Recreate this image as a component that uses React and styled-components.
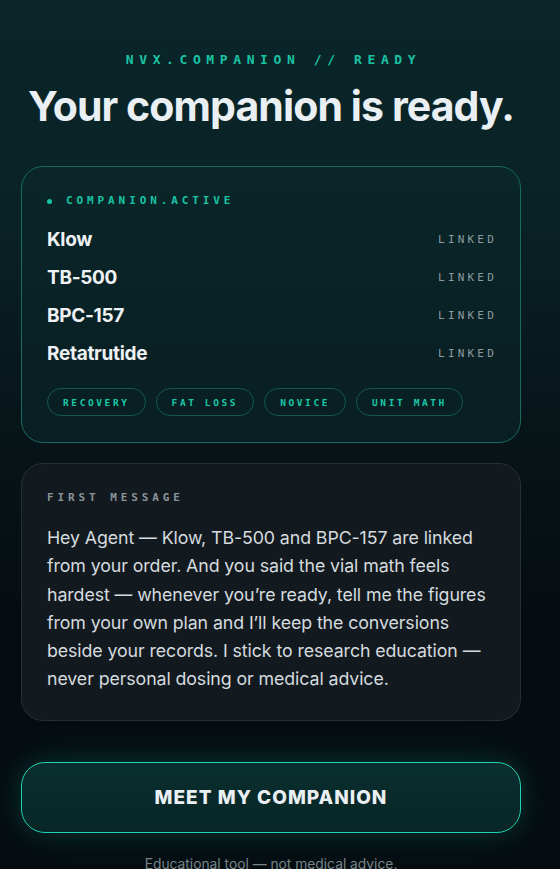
import React from "react";
import styled, { createGlobalStyle } from "styled-components";

const Global = createGlobalStyle`
  html, body { margin: 0; padding: 0; }
  body {
    background: #060d11;
    font-family: Inter, "Noto Sans", sans-serif;
    -webkit-font-smoothing: antialiased;
  }
`;

const Page = styled.div`
  min-height: 869px;
  box-sizing: border-box;
  padding: 50px 21px 0;
  background: linear-gradient(180deg, #0a2629 0%, #092226 25%, #071418 50%, #060d12 70%, #060d11 100%);
`;

const Column = styled.main`
  width: 500px;
  display: flex;
  flex-direction: column;
  align-items: stretch;
`;

const Eyebrow = styled.div`
  font-family: "DejaVu Sans Mono", "Liberation Mono", monospace;
  font-weight: 700;
  font-size: 13px;
  letter-spacing: 5.6px;
  color: #19c3a4;
  text-align: center;
  line-height: 20px;
  padding-left: 5px;
`;

const Heading = styled.h1`
  margin: 12px 0 0;
  font-family: Inter, sans-serif;
  font-weight: 700;
  font-size: 41px;
  letter-spacing: -0.9px;
  line-height: 48px;
  color: #e9eff2;
  text-align: center;
`;

const Card = styled.section`
  box-sizing: border-box;
  border-radius: 22px;
  border: 1px solid ${(p) => (p.$accent ? "#176a5f" : "#243036")};
  background: ${(p) => (p.$accent ? "linear-gradient(180deg, #0a2629 0%, #081e22 100%)" : "#121a20")};
  padding: 26px 25px 26px;
  margin-top: ${(p) => p.$mt}px;
`;

const Label = styled.div`
  font-family: "DejaVu Sans Mono", "Liberation Mono", monospace;
  font-weight: 700;
  font-size: 11px;
  letter-spacing: 3.9px;
  line-height: 16px;
  color: ${(p) => p.$color};
  display: flex;
  align-items: center;
  gap: 14px;
`;

const Dot = styled.span`
  width: 5px;
  height: 5px;
  border-radius: 50%;
  background: #19c3a4;
`;

const List = styled.div`
  margin-top: 18px;
  display: flex;
  flex-direction: column;
  gap: 14px;
`;

const Row = styled.div`
  display: flex;
  justify-content: space-between;
  align-items: center;
  height: 24px;
`;

const Name = styled.span`
  font-family: Inter, sans-serif;
  font-weight: 700;
  font-size: 19px;
  letter-spacing: -0.3px;
  color: #eef2f4;
`;

const Status = styled.span`
  font-family: "DejaVu Sans Mono", "Liberation Mono", monospace;
  font-size: 11px;
  letter-spacing: 3.2px;
  color: #8d9ba0;
  margin-right: -2px;
`;

const Chips = styled.div`
  display: flex;
  gap: 10px;
  margin-top: 23px;
`;

const Chip = styled.span`
  box-sizing: border-box;
  height: 28px;
  padding: 0 15px;
  border-radius: 14px;
  border: 1px solid #17564f;
  display: inline-flex;
  align-items: center;
  font-family: "DejaVu Sans Mono", "Liberation Mono", monospace;
  font-weight: 700;
  font-size: 9.5px;
  letter-spacing: 2.6px;
  color: #1bc7a7;
`;

const Message = styled.p`
  margin: 18px 0 0;
  font-family: Inter, sans-serif;
  font-size: 17.8px;
  line-height: 28.3px;
  color: #d5dbdf;
  letter-spacing: -0.1px;
`;

const Button = styled.button`
  margin-top: 41px;
  height: 71px;
  border-radius: 24px;
  border: 1.5px solid #1fd3b3;
  background: linear-gradient(180deg, #0a2e2e 0%, #082626 100%);
  box-shadow: 0 0 24px rgba(31, 211, 179, 0.16), 0 0 56px rgba(31, 211, 179, 0.07);
  font-family: Inter, sans-serif;
  font-weight: 800;
  font-size: 19px;
  letter-spacing: 1px;
  color: #e9eff2;
  cursor: pointer;
`;

const Footer = styled.div`
  margin-top: 22px;
  text-align: center;
  font-family: Inter, sans-serif;
  font-size: 13.8px;
  line-height: 18px;
  color: #78838a;
`;

const peptides = ["Klow", "TB-500", "BPC-157", "Retatrutide"];
const tags = ["RECOVERY", "FAT LOSS", "NOVICE", "UNIT MATH"];

export default function App() {
  return (
    <>
      <Global />
      <Page>
        <Column>
          <Eyebrow>NVX.COMPANION // READY</Eyebrow>
          <Heading>Your companion is ready.</Heading>

          <Card $accent $mt={36}>
            <Label $color="#19c3a4">
              <Dot />
              COMPANION.ACTIVE
            </Label>
            <List>
              {peptides.map((p) => (
                <Row key={p}>
                  <Name>{p}</Name>
                  <Status>LINKED</Status>
                </Row>
              ))}
            </List>
            <Chips>
              {tags.map((t) => (
                <Chip key={t}>{t}</Chip>
              ))}
            </Chips>
          </Card>

          <Card $mt={20}>
            <Label $color="#8a9499">FIRST MESSAGE</Label>
            <Message>
              Hey Agent — Klow, TB-500 and BPC-157 are linked from your order. And you said the vial
              math feels hardest — whenever you’re ready, tell me the figures from your own plan and
              I’ll keep the conversions beside your records. I stick to research education — never
              personal dosing or medical advice.
            </Message>
          </Card>

          <Button>MEET MY COMPANION</Button>
          <Footer>Educational tool — not medical advice.</Footer>
        </Column>
      </Page>
    </>
  );
}
